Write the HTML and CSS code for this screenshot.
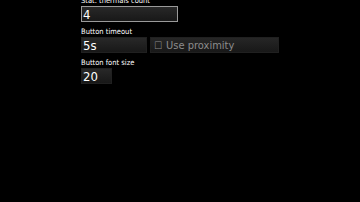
FILE: index.html
```
<!DOCTYPE html>
<html lang="en">

<head>
    <meta charset="UTF-8" />
    <title>Settings</title>
    <meta name="viewport" content="width=device-width, initial-scale=1.0">
    <link rel="stylesheet" href="styles.css">
</head>

<body>
    <div class="settings">
        <!-- Термики -->
        <div class="field-label">Stat. thermals count</div>
        <div class="field-row">
            <div class="input input-focused input-wide">4</div>
        </div>

        <!-- Кнопки -->
        <div class="field-label">Button timeout</div>
        <div class="field-row">
            <div class="input input-medium">5s</div>
            <button class="check-button">
                <span class="check-box">&#9744;</span>
                <span class="check-text">Use proximity</span>
            </button>
        </div>

        <div class="field-label">Button font size</div>
        <div class="field-row">
            <div class="input input-small">20</div>
        </div>
    </div>
</body>

</html>
```

FILE: styles.css
```
* {
    margin: 0;
    padding: 0;
    box-sizing: border-box;
}

html,
body {
    width: 100%;
    height: 100%;
    background-color: #000;
    color: #fff;
    font-family: "DejaVu Sans Condensed", "DejaVu Sans", sans-serif;
    font-stretch: condensed;
    overflow: hidden;
}

.settings {
    display: flex;
    flex-direction: column;
    padding-left: 81px;
    margin-top: -9px;
}

/* Подписи полей */
.field-label {
    font-size: 7.5px;
    line-height: 9px;
    height: 15px;
    padding-top: 5px;
    color: #fff;
}

.field-row {
    display: flex;
    gap: 3px;
    height: 16px;
}

/* Поля ввода */
.input {
    height: 16px;
    background: linear-gradient(#282828, #181818);
    border: 1px solid #202020;
    font-size: 13px;
    line-height: 15px;
    padding-left: 1px;
    color: #fff;
}

.input-focused {
    border-color: #9a9a9a;
}

.input-wide {
    width: 97px;
}

.input-medium {
    width: 66px;
}

.input-small {
    width: 31px;
}

/* Чекбокс */
.check-button {
    display: flex;
    align-items: center;
    gap: 4px;
    width: 129px;
    height: 16px;
    padding-left: 3px;
    padding-top: 1px;
    background: linear-gradient(#262626, #181818);
    border: 1px solid #202020;
    color: #8c8c8c;
    font-family: inherit;
    font-stretch: condensed;
    font-size: 11px;
    cursor: pointer;
}

.check-box {
    font-size: 10px;
}
```
